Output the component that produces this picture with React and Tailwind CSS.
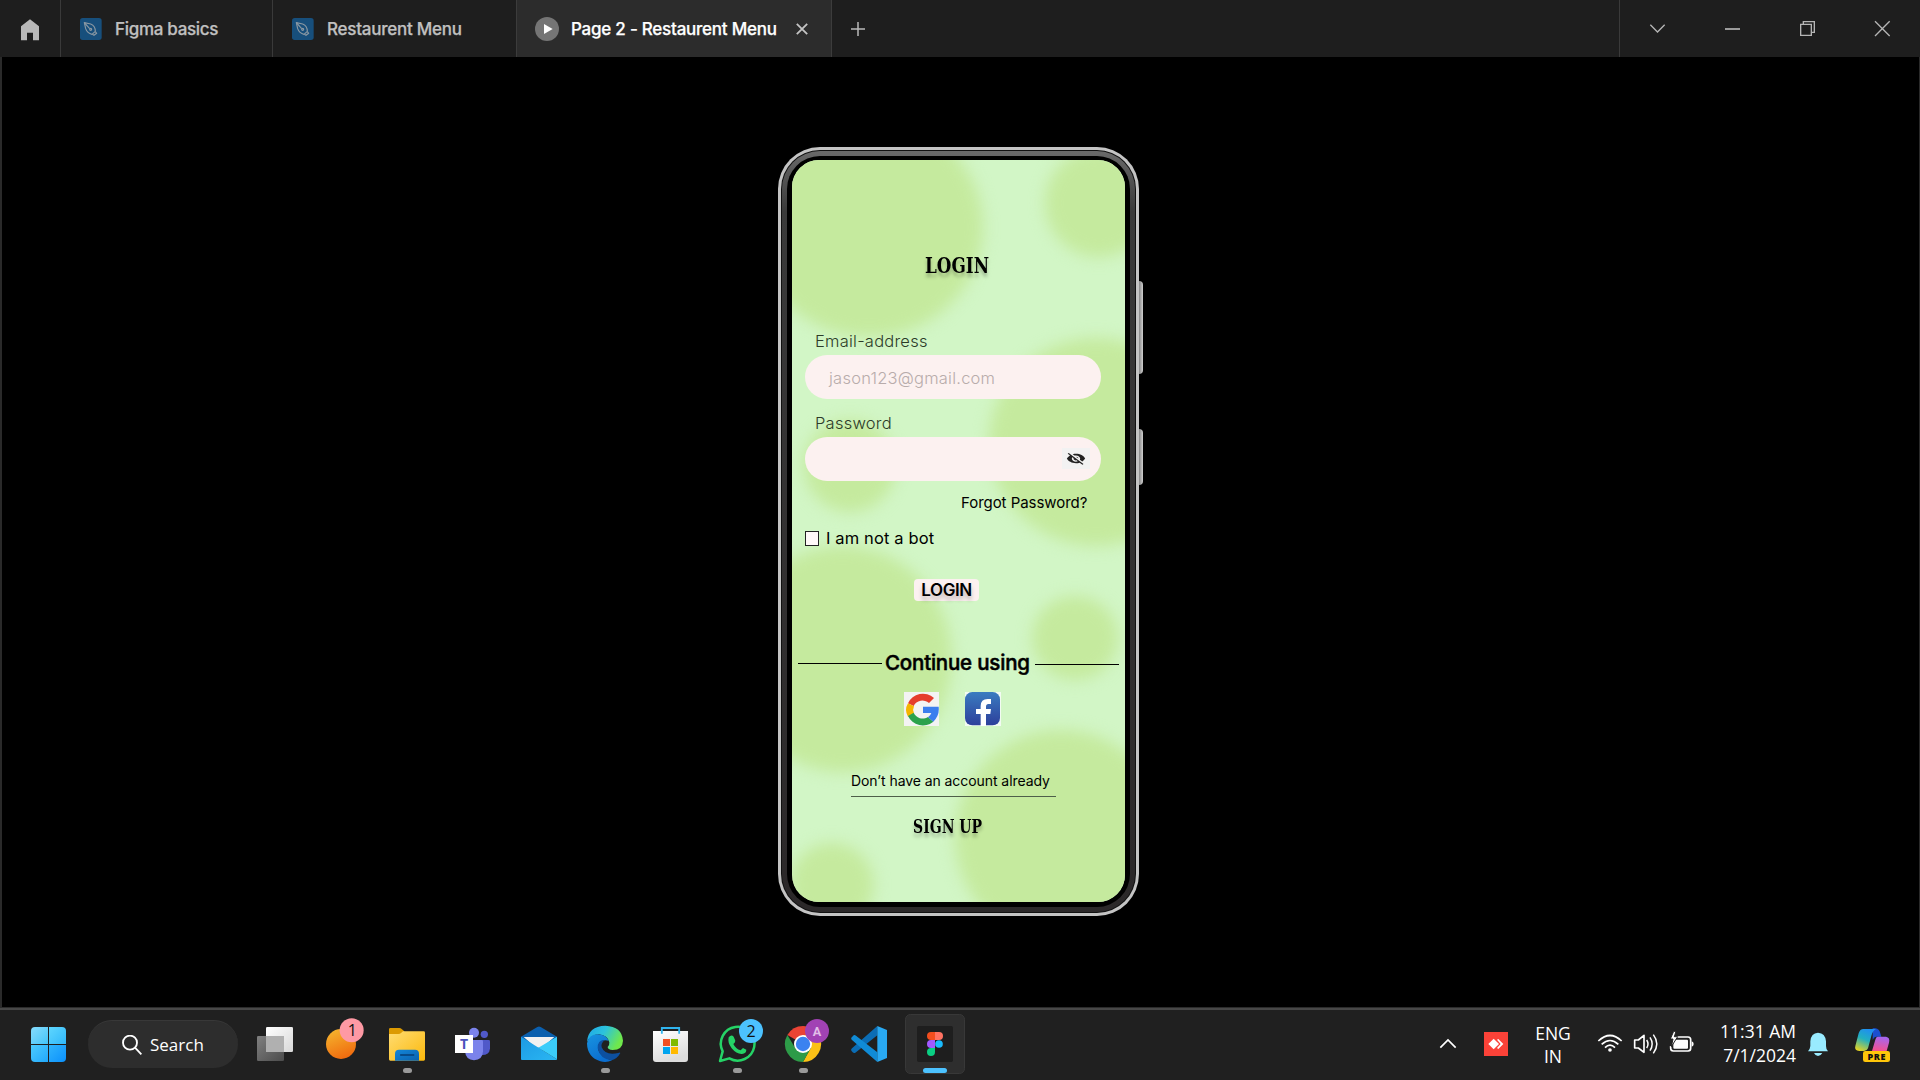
import React from "react";
import { MdVisibilityOff } from "react-icons/md";

const inter = "font-['Inter',sans-serif]";
const segoe = "font-['Open_Sans','Noto_Sans',sans-serif]";
const slab = "font-['DejaVu_Serif_Condensed','DejaVu_Serif',serif]";

function PenIcon() {
  return (
    <svg className="h-[22px] w-[22px] shrink-0" viewBox="0 0 66 66">
      <rect width="65" height="66" rx="8" fill="#174f7c" />
      <g fill="none" stroke="#8a98a3" strokeWidth="3.5" strokeLinejoin="round">
        <path d="M13 14 L32 18 Q46 24 46 40 L36 49 Q22 46 17 32 Z" />
        <path d="M14 15 L29 32" />
        <circle cx="32" cy="34" r="3" />
        <path d="M46 41 L50 46 L42 52 L37 49" />
      </g>
    </svg>
  );
}

function TitleBar() {
  return (
    <header className={`flex h-[57px] w-full bg-[#1e1e1e] text-[17px] font-medium text-[#c0c0c0] ${inter}`}>
      <div className="flex w-[61px] items-center justify-center border-r border-[#3a3a3a]">
        <svg className="mt-0.5 h-[22px] w-[18px]" viewBox="0 0 54 66">
          <path d="M27 1 L54 22 V64 H36 V41 H18 V64 H0 V22 Z" fill="#b8b8b8" />
        </svg>
      </div>
      <div className="flex w-[212px] items-center border-r border-[#3a3a3a] pt-px pl-[19px]">
        <PenIcon />
        <span className="mt-0.5 ml-[13px] whitespace-nowrap tracking-[-0.018em] [-webkit-text-stroke:0.25px]">Figma basics</span>
      </div>
      <div className="flex w-[243px] items-center pt-px pl-[19px]">
        <PenIcon />
        <span className="mt-0.5 ml-[13px] whitespace-nowrap tracking-[-0.014em] [-webkit-text-stroke:0.25px]">Restaurent Menu</span>
      </div>
      <div className="flex w-[316px] items-center border-x border-[#3c3c3c] bg-[#2c2c2c] pt-px pl-[18px] text-white">
        <svg className="h-6 w-6 shrink-0" viewBox="0 0 72 72">
          <circle cx="36" cy="36" r="36" fill="#757575" />
          <path d="M27 21 L53 36 L27 51 Z" fill="#fff" />
        </svg>
        <span className="mt-0.5 ml-3 w-[206px] whitespace-nowrap tracking-[-0.014em] [-webkit-text-stroke:0.25px]">Page 2 - Restaurent Menu</span>
        <svg className="ml-[19px] h-3 w-3 shrink-0" viewBox="0 0 12 12" stroke="#c4c4c4" strokeWidth="1.8">
          <path d="M0.8 0.8 L11.2 11.2 M11.2 0.8 L0.8 11.2" />
        </svg>
      </div>
      <div className="flex w-[51px] items-center justify-center">
        <svg className="h-[14px] w-[14px]" viewBox="0 0 14 14" stroke="#b9b9b9" strokeWidth="1.5">
          <path d="M7 0 V14 M0 7 H14" />
        </svg>
      </div>
      <div className="ml-auto flex w-[301px] items-center border-l border-[#3a3a3a]">
        <svg className="h-[57px] w-[300px]" viewBox="60 0 900 171" fill="none" stroke="#b5b5b5" strokeWidth="4">
          <path d="M151 74 L172.500 96 L194 74" />
          <path d="M375 87 H420" strokeWidth="5" />
          <path d="M602 73 H634 V106 H602 Z M610 73 V65 H643 V97 H634" />
          <path d="M825 64 L869 108 M869 64 L825 108" />
        </svg>
      </div>
    </header>
  );
}

const BLOBS = [
  [77, 67, 114, 110],
  [307, 43, 54, 54],
  [304, 282, 107, 104],
  [58, 306, 46, 46],
  [51, 499, 109, 113],
  [283, 478, 43, 42],
  [269, 677, 106, 107],
  [40, 725, 42, 42],
];

function GoogleLogo() {
  return (
    <svg className="h-[34px] w-[35px]" viewBox="0 0 105 102">
      <rect width="105" height="102" fill="#f3f3f3" />
      <path d="M12 34 A49 48 0 0 1 90 18 L75 33 A29 28 0 0 0 29 42 Z" fill="#e53d2c" />
      <path d="M12 34 L30 43 Q25 53 30 64 L12 74 Q0 54 12 34 Z" fill="#f5b400" />
      <path d="M12 72 L29 62 A29 28 0 0 0 72 75 L88 89 A49 48 0 0 1 12 72 Z" fill="#2ba24c" />
      <path d="M57 44 H104 Q107 71 88 89 L72 76 Q80 70 82 63 H57 Z" fill="#3c7eee" />
    </svg>
  );
}

function FacebookLogo() {
  return (
    <svg className="h-[34px] w-9" viewBox="0 0 108 102">
      <defs>
        <linearGradient id="fb" x1="0" y1="0" x2="0" y2="1">
          <stop offset="0" stopColor="#3a7cc0" />
          <stop offset="1" stopColor="#2d3f9b" />
        </linearGradient>
      </defs>
      <rect width="108" height="102" fill="#f2fbf2" />
      <rect width="105" height="100" rx="22" fill="url(#fb)" />
      <path d="M47 102 V66 H33 V51 H47 V42 Q47 21 68 21 H78 V36 H70 Q63 36 63 44 V51 H78 L76 66 H63 V102 Z" fill="#fff" />
    </svg>
  );
}

function LoginScreen() {
  return (
    <div className={`relative h-[742px] w-[333px] overflow-hidden rounded-[27px] bg-[#d2f6c6] text-black ${inter}`}>
      <svg className="absolute inset-0 h-full w-full" viewBox="0 0 333 742">
        <defs>
          <filter id="soft" x="-50%" y="-50%" width="200%" height="200%" colorInterpolationFilters="sRGB">
            <feGaussianBlur stdDeviation="7.5" />
          </filter>
        </defs>
        {BLOBS.map(([cx, cy, rx, ry]) => (
          <ellipse key={`${cx}-${cy}`} cx={cx} cy={cy} rx={rx} ry={ry} fill="#c5ea9e" filter="url(#soft)" />
        ))}
      </svg>
      <div className="relative flex flex-col pt-[90px]">
        <h1 className={`ml-[133px] flex h-[30px] w-[66px] origin-left scale-x-[0.83] items-center text-[22.500px] leading-[30px] font-bold [text-shadow:0_4px_4px_rgba(0,0,0,0.25)] ${slab}`}>LOGIN</h1>
        <label className="mt-[51px] ml-[23px] h-5 text-[16.500px] leading-5 font-light tracking-[0.014em] text-[#2c3b28]">Email-address</label>
        <div className="mt-1 ml-[13px] flex h-11 w-[296px] items-center rounded-full bg-[#fcf1f0] pt-0.5 pl-6 text-[16.500px] font-light tracking-[0.014em] text-[#b8acab]">jason123@gmail.com</div>
        <label className="mt-[14px] ml-[23px] h-5 text-[16.500px] leading-5 font-light tracking-[0.014em] text-[#2c3b28]">Password</label>
        <div className="mt-1 ml-[13px] flex h-11 w-[296px] items-center justify-end rounded-full bg-[#fcf1f0] pr-[11px]">
          <div className="mb-px flex h-[21px] w-7 items-center justify-center bg-[#f2f2f2]">
            <MdVisibilityOff preserveAspectRatio="none" className="h-[15px] w-5 text-[#222]" />
          </div>
        </div>
        <p className="mt-[11px] ml-[169px] h-[21px] text-[15px] leading-[21px] tracking-[-0.003em] whitespace-nowrap">Forgot Password?</p>
        <div className="mt-[15px] ml-[13px] flex h-5 items-center text-[16.500px]">
          <span className="mt-px h-[15px] w-[14px] border border-[#222] bg-[#fff8f8]" />
          <span className="ml-[7px] h-5 leading-5 tracking-[0.008em]">I am not a bot</span>
        </div>
        <button className="mt-[31px] ml-[122px] h-[22px] w-[65px] rounded bg-[#fcf1f0] text-[17px] leading-[21px] font-semibold tracking-[-0.025em] [text-shadow:0_4px_4px_rgba(0,0,0,0.25)]">LOGIN</button>
        <div className="mt-[50px] ml-[6px] flex h-[25px] w-[321px] items-center">
          <span className="h-px w-[84px] bg-black" />
          <span className="mb-0.5 ml-[3px] w-[145px] text-[20.500px] leading-[25px] font-medium tracking-[-0.01em] whitespace-nowrap [-webkit-text-stroke:0.5px]">Continue using</span>
          <span className="mt-0.5 ml-auto h-px w-[84px] bg-black" />
        </div>
        <div className="mt-4 ml-28 flex gap-[26px]">
          <GoogleLogo />
          <FacebookLogo />
        </div>
        <p className="mt-[45px] ml-[59px] h-[26px] w-[205px] border-b border-[#4e5f49] text-[14px] leading-5 tracking-[-0.005em] whitespace-nowrap">Don’t have an account already</p>
        <p className={`mt-4 ml-[121px] h-[26px] w-[72px] origin-left scale-x-[0.82] text-[19px] leading-[26px] font-bold whitespace-nowrap [text-shadow:0_4px_4px_rgba(0,0,0,0.25)] ${slab}`}>SIGN UP</p>
      </div>
    </div>
  );
}

function Phone() {
  return (
    <div className="relative mt-[90px] ml-[776px] h-[769px] w-[361px]">
      <span className="absolute top-[134px] -right-[4px] h-[93px] w-[5px] rounded-r-sm bg-linear-to-r from-[#777] to-[#d0d0d0]" />
      <span className="absolute top-[282px] -right-[4px] h-[56px] w-[5px] rounded-r-sm bg-linear-to-r from-[#777] to-[#d0d0d0]" />
      <div className="relative h-full w-full rounded-[42px] bg-[#c4c4c4] p-[3px]">
        <div className="h-full w-full rounded-[39px] bg-[#111] p-px">
          <div className="h-full w-full rounded-[38px] bg-linear-to-b from-[#6a6a6a] via-[#3a3a3a] via-8% to-[#2b2829] p-[5px]">
            <div className="h-full w-full rounded-[33px] bg-black px-[5px] pt-1">
              <LoginScreen />
            </div>
          </div>
        </div>
      </div>
    </div>
  );
}

/* Taskbar artwork is drawn on a grid of three units per pixel. */
function Cell({ x, running, children }) {
  return (
    <svg className="h-[70px] w-[66px] shrink-0" viewBox={`${x} 30 198 210`}>
      {children}
      {running && <rect x={x + 87} y="204" width="27" height="15" rx="7.5" fill="#9a9a9a" />}
    </svg>
  );
}

function TaskIcons() {
  return (
    <>
      <Cell x={726}>
        <defs>
          <linearGradient id="tv1" x1="0" y1="0" x2="1" y2="1"><stop offset="0" stopColor="#fff" /><stop offset="1" stopColor="#d8d8d8" /></linearGradient>
          <linearGradient id="tv2" x1="0" y1="0" x2="1" y2="1"><stop offset="0" stopColor="#808080" /><stop offset="1" stopColor="#4c4c4c" /></linearGradient>
        </defs>
        <rect x="771" y="108" width="81" height="75" rx="4" fill="url(#tv2)" />
        <rect x="798" y="81" width="81" height="75" rx="4" fill="url(#tv1)" />
        <rect x="798" y="108" width="54" height="48" fill="#b0b0b0" />
      </Cell>
      <Cell x={-6}>
        <defs>
          <linearGradient id="org" x1="0.2" y1="0" x2="0.6" y2="1"><stop offset="0" stopColor="#f5b52e" /><stop offset="1" stopColor="#f06a0e" /></linearGradient>
        </defs>
        <circle cx="93" cy="132" r="45" fill="url(#org)" />
        <circle cx="125" cy="91" r="36" fill="#fe99a4" />
        <text x="127" y="108" textAnchor="middle" fontSize="48" fontFamily="'Open Sans', sans-serif" fill="#111">1</text>
      </Cell>
      <Cell x={192} running>
        <defs>
          <linearGradient id="fold" x1="0" y1="0" x2="1" y2="1"><stop offset="0" stopColor="#ffdc72" /><stop offset="1" stopColor="#fbb90c" /></linearGradient>
          <linearGradient id="fold2" x1="0" y1="0" x2="1" y2="1"><stop offset="0" stopColor="#1486d8" /><stop offset="1" stopColor="#0a62b0" /></linearGradient>
        </defs>
        <path d="M237 88 Q237 84 241 84 H268 Q272 84 275 87 L283 94 V110 H237 Z" fill="#dc9a02" />
        <path d="M237 102 H265 Q270 102 274 98 L279 94 H341 Q345 94 345 98 V178 Q345 182 341 182 H241 Q237 182 237 178 Z" fill="url(#fold)" />
        <path d="M255 182 V161 Q255 149 267 149 H315 Q327 149 327 161 V182 Z" fill="url(#fold2)" />
        <rect x="270" y="162" width="43" height="6" rx="2" fill="#084a88" />
      </Cell>
      <Cell x={390}>
        <circle cx="492" cy="98" r="15" fill="#7b83eb" />
        <circle cx="523" cy="103" r="11" fill="#5059c9" />
        <path d="M500 120 H536 Q540 120 540 124 V146 Q538 165 516 165 H500 Z" fill="#5059c9" />
        <path d="M465 120 H515 Q519 120 519 124 V154 Q518 180 492 181 Q467 180 465 154 Z" fill="#7b83eb" />
        <rect x="435" y="105" width="54" height="54" fill="#fff" />
        <text x="462" y="148" textAnchor="middle" fontSize="42" fontWeight="700" fontFamily="'Open Sans', sans-serif" fill="#4b53bc">T</text>
      </Cell>
      <Cell x={588}>
        <defs>
          <linearGradient id="mail" x1="0" y1="0" x2="1" y2="1"><stop offset="0" stopColor="#1d9ae4" /><stop offset="1" stopColor="#2ab6f2" /></linearGradient>
        </defs>
        <path d="M633 110 L682 81 Q687 78 692 81 L741 110 V150 H633 Z" fill="#0a5fae" />
        <path d="M641 111 H733 L696 143 H678 Z" fill="#f1f1f1" />
        <path d="M633 110 L741 178 Q741 180 738 180 H636 Q633 180 633 177 Z" fill="url(#mail)" />
        <path d="M741 110 V178 L685 143 Z" fill="#3bcdfa" />
      </Cell>
      <Cell x={786} running>
        <defs>
          <linearGradient id="edg1" x1="0" y1="0" x2="1" y2="0.4"><stop offset="0" stopColor="#1ea5e8" /><stop offset="0.5" stopColor="#2cc3dc" /><stop offset="1" stopColor="#6fe84c" /></linearGradient>
          <linearGradient id="edg2" x1="0" y1="0" x2="0.5" y2="1"><stop offset="0" stopColor="#1893e0" /><stop offset="1" stopColor="#0b6ed0" /></linearGradient>
        </defs>
        <path d="M831 126 Q834 78 886 77 Q936 79 939 122 Q938 150 908 150 Q893 149 893 141 Q899 135 898 127 Q893 106 867 103 Q843 103 831 126 Z" fill="url(#edg1)" />
        <path d="M831 130 Q836 103 863 103 Q888 104 896 122 Q872 116 864 138 Q862 168 906 181 Q890 189 871 184 Q832 172 831 130 Z" fill="url(#edg2)" />
        <path d="M884 120 Q862 120 863 145 Q870 178 905 181 Q922 176 931 159 Q929 156 925 159 Q886 168 875 142 Q872 130 884 120 Z" fill="#0d50a0" />
      </Cell>
      <Cell x={-6}>
        <defs>
          <linearGradient id="sto" x1="0" y1="0" x2="0.4" y2="1"><stop offset="0" stopColor="#fff" /><stop offset="1" stopColor="#dcdcdc" /></linearGradient>
        </defs>
        <path d="M39 93 H144 V177 Q144 186 135 186 H48 Q39 186 39 177 Z" fill="url(#sto)" />
        <path d="M65.500 101 V84 H117.500 V101" fill="none" stroke="#2fb4ee" strokeWidth="5.500" />
        <rect x="69" y="117" width="21" height="21" fill="#f25022" />
        <rect x="93" y="117" width="21" height="21" fill="#7fba00" />
        <rect x="69" y="141" width="21" height="21" fill="#00a4ef" />
        <rect x="93" y="141" width="21" height="21" fill="#ffb900" />
      </Cell>
      <Cell x={192} running>
        <path d="M240 183 L248 154 A50.500 50.500 0 1 1 268 175 Z" fill="none" stroke="#25d366" strokeWidth="7.500" strokeLinejoin="round" />
        <path d="M266 112 Q274 102 281 110 L286 122 Q286 127 280 132 Q287 147 302 151 L309 144 L319 149 Q319 160 306 162 Q290 163 275 145 Q262 128 266 112 Z" fill="#25d366" />
        <circle cx="333" cy="93" r="36" fill="#4cc2ff" />
        <text x="333" y="110" textAnchor="middle" fontSize="48" fontFamily="'Open Sans', sans-serif" fill="#111">2</text>
      </Cell>
      <Cell x={390} running>
        <path d="M489 132 L442.200 105 A54 54 0 0 1 535.800 105 Z" fill="#ea4335" />
        <path d="M489 105 H535.800 A54 54 0 0 1 489 186 L512 145 Z" fill="#fbc116" />
        <path d="M489 132 L512 145 L489 186 A54 54 0 0 1 442.200 105 L466 145 Z" fill="#2d9b48" />
        <circle cx="489" cy="132" r="27" fill="#fff" />
        <circle cx="489" cy="132" r="21.500" fill="#3b82f0" />
        <circle cx="531" cy="93" r="36" fill="#a142b4" />
        <text x="531" y="107" textAnchor="middle" fontSize="38" fontWeight="700" fontFamily="Roboto, sans-serif" fill="#e2bde8">A</text>
      </Cell>
      <Cell x={588}>
        <path d="M712 106 L646 158 Q642 161 638 157 L634 152 Q632 148 636 145 L712 78 Z" fill="#0b6db5" />
        <path d="M634 113 L641 106 Q644 104 648 107 L712 157 V186 L636 120 Q632 117 634 113 Z" fill="#108bd6" />
        <path d="M712 78 L741 90 V174 L712 186 Z" fill="#29a9f2" />
      </Cell>
      <Cell x={786}>
        <rect x="796.500" y="43.500" width="177" height="177" rx="15" fill="#2e2e2e" stroke="#383838" strokeWidth="3" />
        <rect x="831" y="78" width="108" height="108" rx="5" fill="#1e1e1e" />
        <path d="M885 96 H873 A12 12 0 0 0 873 120 H885 Z" fill="#f24e1e" />
        <path d="M885 96 H897 A12 12 0 0 1 897 120 H885 Z" fill="#ff7262" />
        <path d="M885 120 H873 A12 12 0 0 0 873 144 H885 Z" fill="#a259ff" />
        <circle cx="897" cy="132" r="11.500" fill="#1abcfe" />
        <path d="M885 144 H873 A12 12 0 1 0 885 156 Z" fill="#0acf83" />
        <rect x="849" y="204" width="72" height="15" rx="7.500" fill="#4cc2ff" />
      </Cell>
    </>
  );
}

function Taskbar() {
  return (
    <footer className={`flex h-[70px] w-full items-start bg-[#202020] text-white ${segoe}`}>
      <div className="mt-[17px] ml-[31px] grid h-[35px] w-[35px] shrink-0 grid-cols-2 gap-px overflow-hidden rounded-sm">
        <span className="bg-linear-to-br from-[#85dcfd] to-[#40c4f8]" />
        <span className="bg-linear-to-br from-[#5ed6fe] to-[#2db8fb]" />
        <span className="bg-linear-to-br from-[#4ccbfd] to-[#20a8fb]" />
        <span className="bg-linear-to-br from-[#2fb4fc] to-[#0a90fb]" />
      </div>
      <div className="mt-[10px] ml-[22px] flex h-12 w-[150px] shrink-0 items-center rounded-full border-t border-[#383838] bg-[#2d2d2d] pl-[34px]">
        <svg className="h-5 w-5" viewBox="0 0 60 60" fill="none" stroke="#fff" strokeWidth="5.500">
          <circle cx="24" cy="23" r="21" />
          <path d="M39 38 L58 58" />
        </svg>
        <span className="ml-2 text-[17px] leading-6">Search</span>
      </div>
      <div className="ml-1 flex">
        <TaskIcons />
      </div>
      <div className="ml-auto flex h-[70px] w-[500px]">
        <svg className="h-[70px] w-[105px] shrink-0" viewBox="0 30 315 210">
          <path d="M61 143 L84 120 L107 143" fill="none" stroke="#fff" strokeWidth="5" />
          <rect x="192" y="96" width="72" height="72" fill="#fb4238" />
          <path d="M205 132 L221 116 L237 132 L221 148 Z" fill="#fff" />
          <path d="M231 119 L235 117 L250 132 L235 147 L231 144 L242 132 Z" fill="#fff" />
        </svg>
        <div className="flex w-14 flex-col items-center pt-3 text-[17.500px] leading-[23px]">
          <span>ENG</span>
          <span>IN</span>
        </div>
        <svg className="h-[70px] w-[117px] shrink-0" viewBox="483 30 351 210" fill="none" stroke="#fff" strokeWidth="5">
          <path d="M535 123 Q570 90 605 123" />
          <path d="M545 133 Q570 110 595 133" />
          <path d="M555 143 Q570 128 585 143" />
          <circle cx="570" cy="150" r="5.500" fill="#fff" stroke="none" />
          <path d="M644 120 H655 L672 106 V157 L655 144 H644 Z" strokeLinejoin="round" />
          <path d="M680 120 Q688 132 680 144 M690 112 Q703 132 690 152 M700 104 Q721 132 700 160" strokeWidth="4.500" />
          <g transform="translate(750 0)">
            <path d="M16 111 H54 Q62 111 62 119 V145 Q62 153 54 153 H10 Q2 153 2 145 V138" />
            <rect x="10" y="119" width="44" height="27" rx="3" fill="#fff" stroke="none" />
            <path d="M65 124 Q71 126 71 132 Q71 138 65 140 Z" fill="#fff" stroke="none" />
            <path d="M11 94 L1 117 H9 L4 140 L23 110 H13 L18 94 Z" fill="#fff" stroke="#202020" strokeWidth="3" />
          </g>
        </svg>
        <div className="flex w-[99px] flex-col items-end pt-[9px] pr-px text-[17.500px] leading-6">
          <span className="whitespace-nowrap">11:31 AM</span>
          <span className="whitespace-nowrap">7/1/2024</span>
        </div>
        <svg className="h-[70px] w-[123px] shrink-0" viewBox="381 30 369 210">
          <defs>
            <linearGradient id="cop1" x1="0.6" y1="0" x2="0.2" y2="1"><stop offset="0" stopColor="#1f8ff0" /><stop offset="0.45" stopColor="#22b0c0" /><stop offset="1" stopColor="#e8d420" /></linearGradient>
            <linearGradient id="cop2" x1="0.5" y1="0" x2="0.3" y2="1"><stop offset="0" stopColor="#a566f0" /><stop offset="1" stopColor="#f6508c" /></linearGradient>
          </defs>
          <path d="M414 154 Q420 148 421 138 V124 Q423 99 444 98 Q466 99 468 124 V138 Q468 148 474 154 Z" fill="#99ebff" />
          <path d="M432 159 H457 Q452 168 444 168 Q436 168 432 159 Z" fill="#99ebff" />
          <path d="M608 85 H616 Q628 87 631 100 L634 110 H620 Q612 110 608 120 Z" fill="#1b4fd0" />
          <path d="M580 87 H618 Q608 92 604 108 L594 145 Q591 153 582 153 H568 Q552 152 556 138 L566 100 Q570 87 580 87 Z" fill="url(#cop1)" />
          <path d="M623 110 H648 Q661 112 657 128 L650 153 H606 L616 119 Q618 110 623 110 Z" fill="url(#cop2)" />
          <rect x="579" y="153" width="81" height="33" rx="7" fill="#ffc60a" />
          <text x="620.500" y="179" textAnchor="middle" fontSize="27" fontWeight="800" letterSpacing="2" fontFamily="'Open Sans', sans-serif" fill="#111">PRE</text>
        </svg>
      </div>
    </footer>
  );
}

export default function App() {
  return (
    <div className="flex h-[1080px] w-[1920px] flex-col overflow-hidden bg-black">
      <TitleBar />
      <main className="h-[950px] w-full border-r border-l-2 border-r-[#2a2a2a] border-l-[#2a2a2a] bg-black">
        <div className="flex">
          <Phone />
        </div>
      </main>
      <div className="h-[3px] w-full border-t border-[#2b2b2b] bg-[#474747]" />
      <Taskbar />
    </div>
  );
}
